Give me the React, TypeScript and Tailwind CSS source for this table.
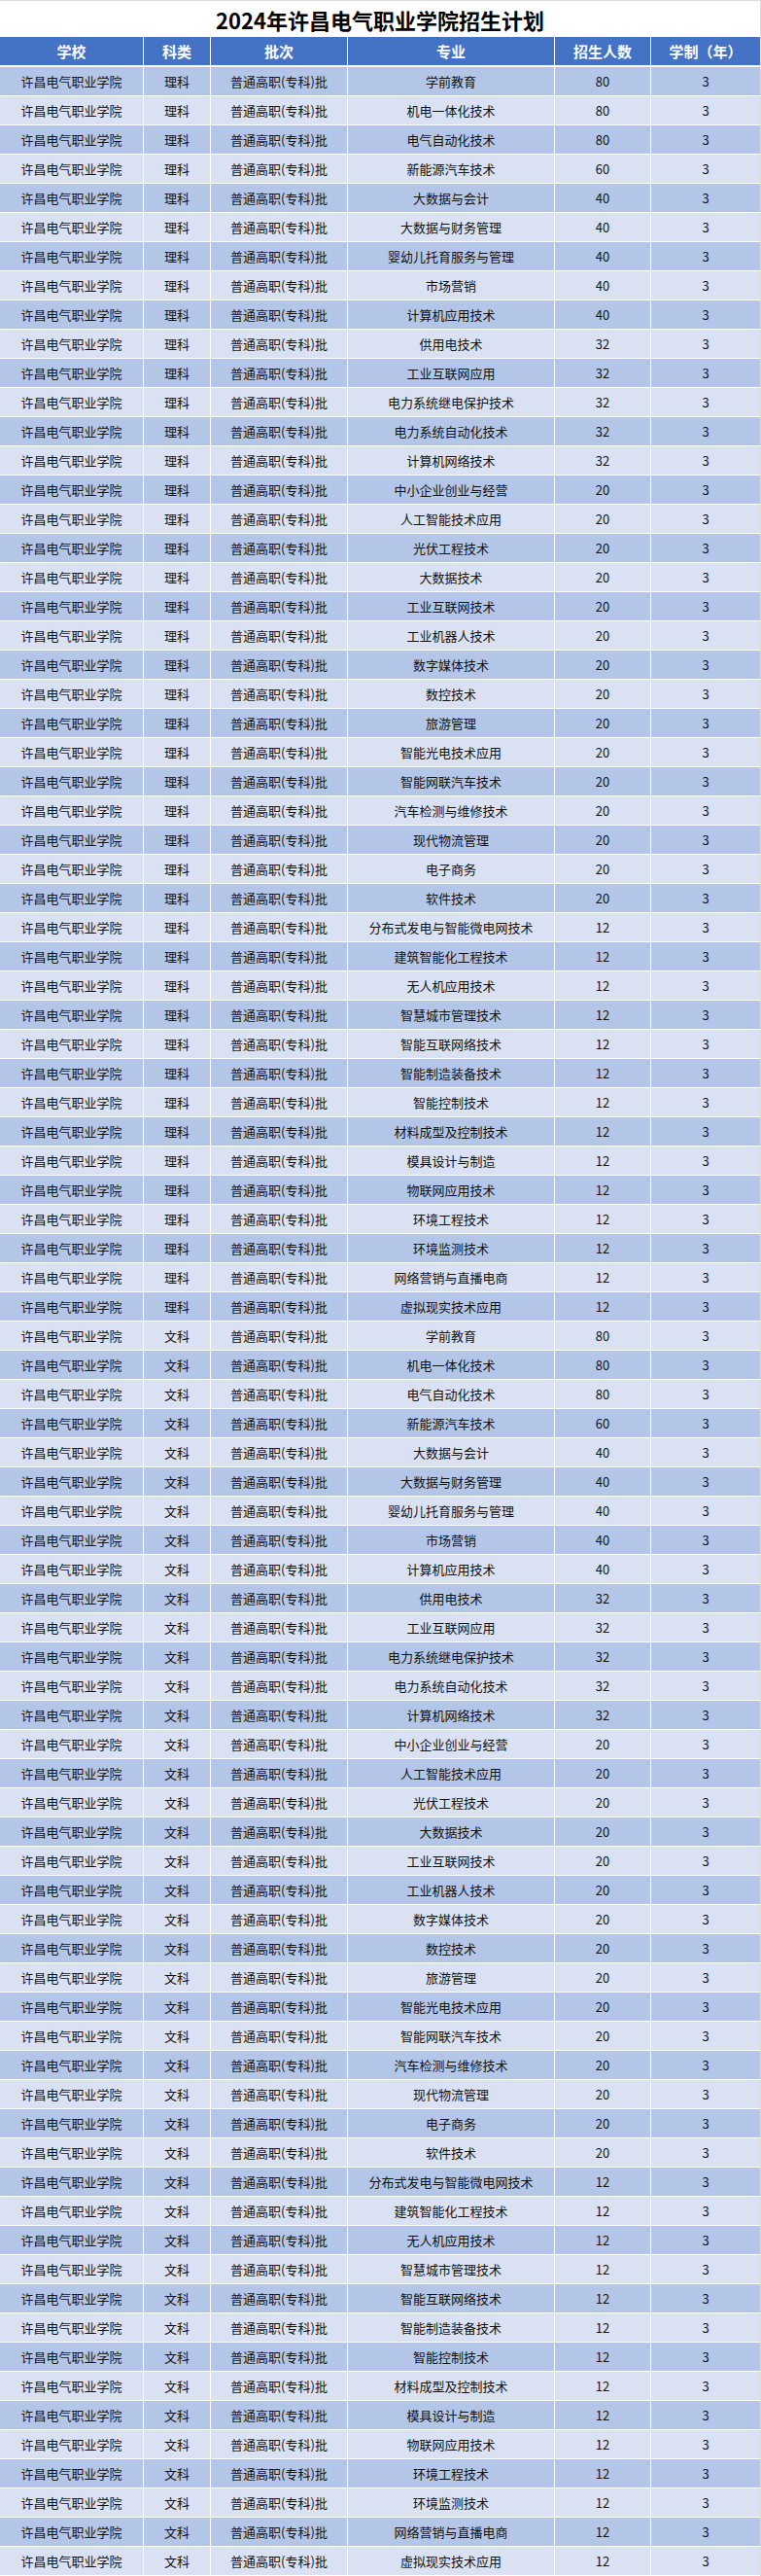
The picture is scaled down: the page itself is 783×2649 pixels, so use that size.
import React from "react";

const majors: [string, number][] = [
  ["学前教育", 80],
  ["机电一体化技术", 80],
  ["电气自动化技术", 80],
  ["新能源汽车技术", 60],
  ["大数据与会计", 40],
  ["大数据与财务管理", 40],
  ["婴幼儿托育服务与管理", 40],
  ["市场营销", 40],
  ["计算机应用技术", 40],
  ["供用电技术", 32],
  ["工业互联网应用", 32],
  ["电力系统继电保护技术", 32],
  ["电力系统自动化技术", 32],
  ["计算机网络技术", 32],
  ["中小企业创业与经营", 20],
  ["人工智能技术应用", 20],
  ["光伏工程技术", 20],
  ["大数据技术", 20],
  ["工业互联网技术", 20],
  ["工业机器人技术", 20],
  ["数字媒体技术", 20],
  ["数控技术", 20],
  ["旅游管理", 20],
  ["智能光电技术应用", 20],
  ["智能网联汽车技术", 20],
  ["汽车检测与维修技术", 20],
  ["现代物流管理", 20],
  ["电子商务", 20],
  ["软件技术", 20],
  ["分布式发电与智能微电网技术", 12],
  ["建筑智能化工程技术", 12],
  ["无人机应用技术", 12],
  ["智慧城市管理技术", 12],
  ["智能互联网络技术", 12],
  ["智能制造装备技术", 12],
  ["智能控制技术", 12],
  ["材料成型及控制技术", 12],
  ["模具设计与制造", 12],
  ["物联网应用技术", 12],
  ["环境工程技术", 12],
  ["环境监测技术", 12],
  ["网络营销与直播电商", 12],
  ["虚拟现实技术应用", 12],
];

const rows = [
  ...majors.map(([m, n]) => ({ kind: "理科", m, n })),
  ...majors.map(([m, n]) => ({ kind: "文科", m, n })),
];

const gridCols = "grid grid-cols-[147px_68px_140px_212px_98px_1fr] gap-x-px";

export default function App() {
  return (
    <div
      className="w-[783px] bg-white border-t border-r border-[#dcdcdc] pb-px"
      style={{ fontFamily: '"Noto Sans CJK SC", "Noto Sans", sans-serif' }}
    >
      <div className="h-[37px] flex items-center justify-center text-[22px] font-bold text-black leading-none">
        2024年许昌电气职业学院招生计划
      </div>
      <div className={`${gridCols} h-[29px] text-white font-bold text-[15px] leading-none`}>
        {["学校", "科类", "批次", "专业", "招生人数", "学制（年）"].map((h) => (
          <div key={h} className="bg-[#4472C4] flex items-center justify-center">
            {h}
          </div>
        ))}
      </div>
      <div className="flex flex-col gap-y-px mt-[2px]">
        {rows.map((r, i) => {
          const bg = i % 2 === 0 ? "bg-[#B4C6E7]" : "bg-[#D9E1F2]";
          return (
            <div key={i} className={`${gridCols} h-[29px] text-[13px] text-[#111] leading-none`}>
              {["许昌电气职业学院", r.kind, "普通高职(专科)批", r.m, String(r.n), "3"].map((c, j) => (
                <div key={j} className={`${bg} flex items-center justify-center whitespace-nowrap`}>
                  {c}
                </div>
              ))}
            </div>
          );
        })}
      </div>
    </div>
  );
}
